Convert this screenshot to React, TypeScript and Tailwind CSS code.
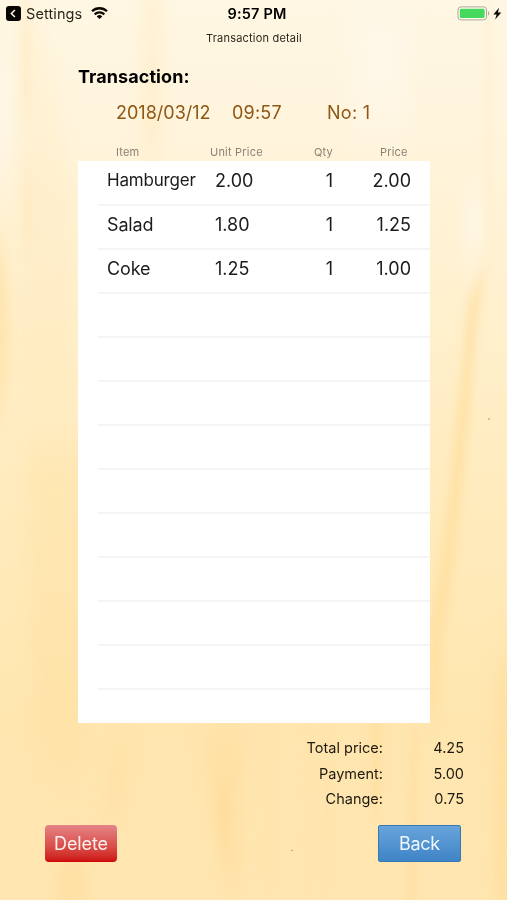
import React from 'react'

const items = [
  { name: 'Hamburger', unit: '2.00', qty: 1, price: '2.00' },
  { name: 'Salad', unit: '1.80', qty: 1, price: '1.25' },
  { name: 'Coke', unit: '1.25', qty: 1, price: '1.00' },
]

const totals = [
  { label: 'Total price:', value: '4.25' },
  { label: 'Payment:', value: '5.00' },
  { label: 'Change:', value: '0.75' },
]

const EMPTY_ROWS = 9

function WoodBackground() {
  return (
    <svg className="absolute inset-0 -z-10" width="507" height="900" viewBox="0 0 507 900" aria-hidden="true">
      <defs>
        <linearGradient id="wood" x1="0" y1="0" x2="0" y2="1">
          <stop offset="0" stopColor="#fff7e3" />
          <stop offset="0.15" stopColor="#fff4dc" />
          <stop offset="0.35" stopColor="#fff0cd" />
          <stop offset="0.55" stopColor="#ffebbd" />
          <stop offset="0.8" stopColor="#ffe6af" />
          <stop offset="1" stopColor="#ffe6b1" />
        </linearGradient>
        <filter id="soft" x="-150%" y="-30%" width="400%" height="160%">
          <feGaussianBlur stdDeviation="8 22" />
        </filter>
        <filter id="fine" x="-150%" y="-20%" width="400%" height="140%">
          <feGaussianBlur stdDeviation="3.5 12" />
        </filter>
      </defs>
      <rect width="507" height="900" fill="url(#wood)" />
      <g fill="#ffda95" filter="url(#soft)">
        <path d="M18 20h22l34 180v200H18z" opacity="0.14" />
        <path d="M-10 240h10l6 70-4 90-12 20z" opacity="0.85" />
        <path d="M26 440h60v300l-20 40-30-40z" opacity="0.25" />
        <path d="M145 -20h16l-2 120 2 60h-18z" opacity="0.25" />
        <path d="M116 740h14l-12 80-18 10z" opacity="0.4" />
        <path d="M60 850h25v70h-28z" opacity="0.5" />
        <path d="M202 725h50l-12 70 4 90-16 5-14-60z" opacity="0.4" />
        <path d="M499 660h24v260h-28z" opacity="0.6" />
      </g>
      <g fill="#ffda95" filter="url(#fine)">
        <path d="M22 0h8v110h-8zM23 180h8v60h-8z" opacity="0.2" />
        <path d="M487 260l-10 22-10 22-6 70-6 50-6 70-12 90-8 50v80h9l4-70 12-80 10-90 6-60 6-80 8-50z" opacity="0.55" />
        <path d="M265 722h8v178h-8zM306 722h6v178h-8zM324 722h5v178h-7z" opacity="0.2" />
        <path d="M372 710h10l-2 90-8 20z" opacity="0.55" />
        <path d="M410 722h9l-2 198h-12z" opacity="0.35" />
        <path d="M214 790h18l-4 50-6 20z" opacity="0.45" />
        <path d="M486 0h5v250h-5z" opacity="0.15" />
      </g>
      <g fill="#fffbf2" filter="url(#soft)">
        <path d="M-10 60h24v110h-24z" opacity="0.4" />
        <path d="M350 10h60v120h-60z" opacity="0.4" />
        <path d="M466 190h16v70h-16z" opacity="0.7" />
      </g>
      <circle cx="489" cy="419" r="1" fill="#c9b478" />
      <circle cx="292" cy="850.5" r="0.8" fill="#a89468" />
    </svg>
  )
}

function StatusBar() {
  return (
    <div className="grid h-7 grid-cols-3 items-center">
      <div className="flex items-center pl-[6px]">
        <svg className="-mt-px" width="15" height="15" viewBox="0 0 15 15">
          <rect width="15" height="15" rx="3" fill="#080602" />
          <path d="M8.9 4 5.4 7.5 8.9 11" fill="none" stroke="#fff6e0" strokeWidth="1.6" />
        </svg>
        <span className="ml-[5px] text-[14.5px] tracking-[0.1px] text-[#2b261c]">Settings</span>
        <svg className="-mt-[2px] ml-[9px]" width="17" height="12" viewBox="0 0 17 12" fill="none" stroke="#0c0903" strokeWidth="2.3">
          <path d="M1 4.3a10.7 10.7 0 0 1 15 0" />
          <path d="M3.7 7.4a6.8 6.8 0 0 1 9.6 0" />
          <path d="M8.5 12 5.7 9.4a4 4 0 0 1 5.6 0z" fill="#0c0903" stroke="none" />
        </svg>
      </div>
      <div className="pl-[7px] text-center text-[14.5px] font-semibold tracking-[0.2px] whitespace-nowrap">9:57 PM</div>
      <div className="flex items-center justify-end pr-[5px]">
        <svg className="-mt-[2px]" width="45" height="15" viewBox="0 0 45 15">
          <rect x="1" y="0.9" width="28.5" height="13" rx="3" fill="#fffdf0" stroke="#aaa798" />
          <rect x="2.8" y="2.7" width="24.8" height="9.4" rx="1.4" fill="#45d95d" />
          <path d="M31 5.2c1.6.6 1.6 3.8 0 4.4z" fill="#aaa798" />
          <path d="M42 1.8 36.4 8.4h3.2l-1.5 5.2 6.2-7h-3.3z" fill="#0c0903" />
        </svg>
      </div>
    </div>
  )
}

function App() {
  return (
    <div className="relative isolate flex h-[900px] w-[507px] flex-col overflow-hidden font-['Inter',sans-serif] text-black">
      <WoodBackground />
      <StatusBar />
      <h1 className="h-5 pl-px text-center text-[11px] leading-5 tracking-[0.2px] text-[#2c261c]">Transaction detail</h1>

      <h2 className="mt-[17px] h-6 pl-[78px] text-[18px] leading-6 font-bold tracking-[0.08px]">Transaction:</h2>
      <div className="mt-3 grid h-6 grid-cols-[116px_95px_1fr] pl-[116px] text-[18px] leading-6 text-[#8f5716]">
        <span>2018/03/12</span>
        <span className="tracking-[0.2px]">09:57</span>
        <span className="tracking-[0.3px]">No: 1</span>
      </div>

      <div className="mt-[19px] grid h-[17px] grid-cols-[94px_104px_66px_1fr] pl-[116px] text-[11px] leading-[17px] tracking-[0.2px] text-[#8a8375]">
        <span>Item</span>
        <span>Unit Price</span>
        <span>Qty</span>
        <span>Price</span>
      </div>

      <div className="ml-[78px] h-[562px] w-[352px] overflow-hidden bg-white pt-px">
        {items.map((item) => (
          <div key={item.name} className="ml-[20px] h-11 border-b-2 border-[#f5f5f5]">
            <div className="grid h-[37px] grid-cols-[108px_60px_58px_78px] items-center pl-[9px] text-[18px] leading-[27px] text-[#1c1c1c]">
              <span className={item.name.length > 8 ? 'text-[17px] tracking-[-0.2px]' : 'tracking-[-0.15px]'}>
                {item.name}
              </span>
              <span>{item.unit}</span>
              <span className="text-right">{item.qty}</span>
              <span className="text-right">{item.price}</span>
            </div>
          </div>
        ))}
        {Array.from({ length: EMPTY_ROWS }, (_, i) => (
          <div key={i} className="ml-[20px] h-11 border-b-2 border-[#f5f5f5]" />
        ))}
      </div>

      <div className="mt-[12px] pr-[43px] text-[14.5px] leading-[25.7px] text-[#1f1a10]">
        {totals.map((t) => (
          <div key={t.label} className="grid grid-cols-[383px_1fr] text-right">
            <span>{t.label}</span>
            <span>{t.value}</span>
          </div>
        ))}
      </div>

      <div className="mt-[13px] flex items-start justify-between pr-[46px] pl-[45px] text-[18px]">
        <button className="h-[37px] w-[72px] rounded-[4px] bg-linear-to-b from-[#e48387] to-[#cd0309] tracking-[-0.1px] text-[#fff0ee]">
          Delete
        </button>
        <button className="h-[37px] w-[83px] rounded-[2px] border border-[#3779b5] bg-linear-to-b from-[#68a4db] to-[#3f84c6] tracking-[-0.3px] text-[#eef7ff]">
          Back
        </button>
      </div>
    </div>
  )
}

export default App
